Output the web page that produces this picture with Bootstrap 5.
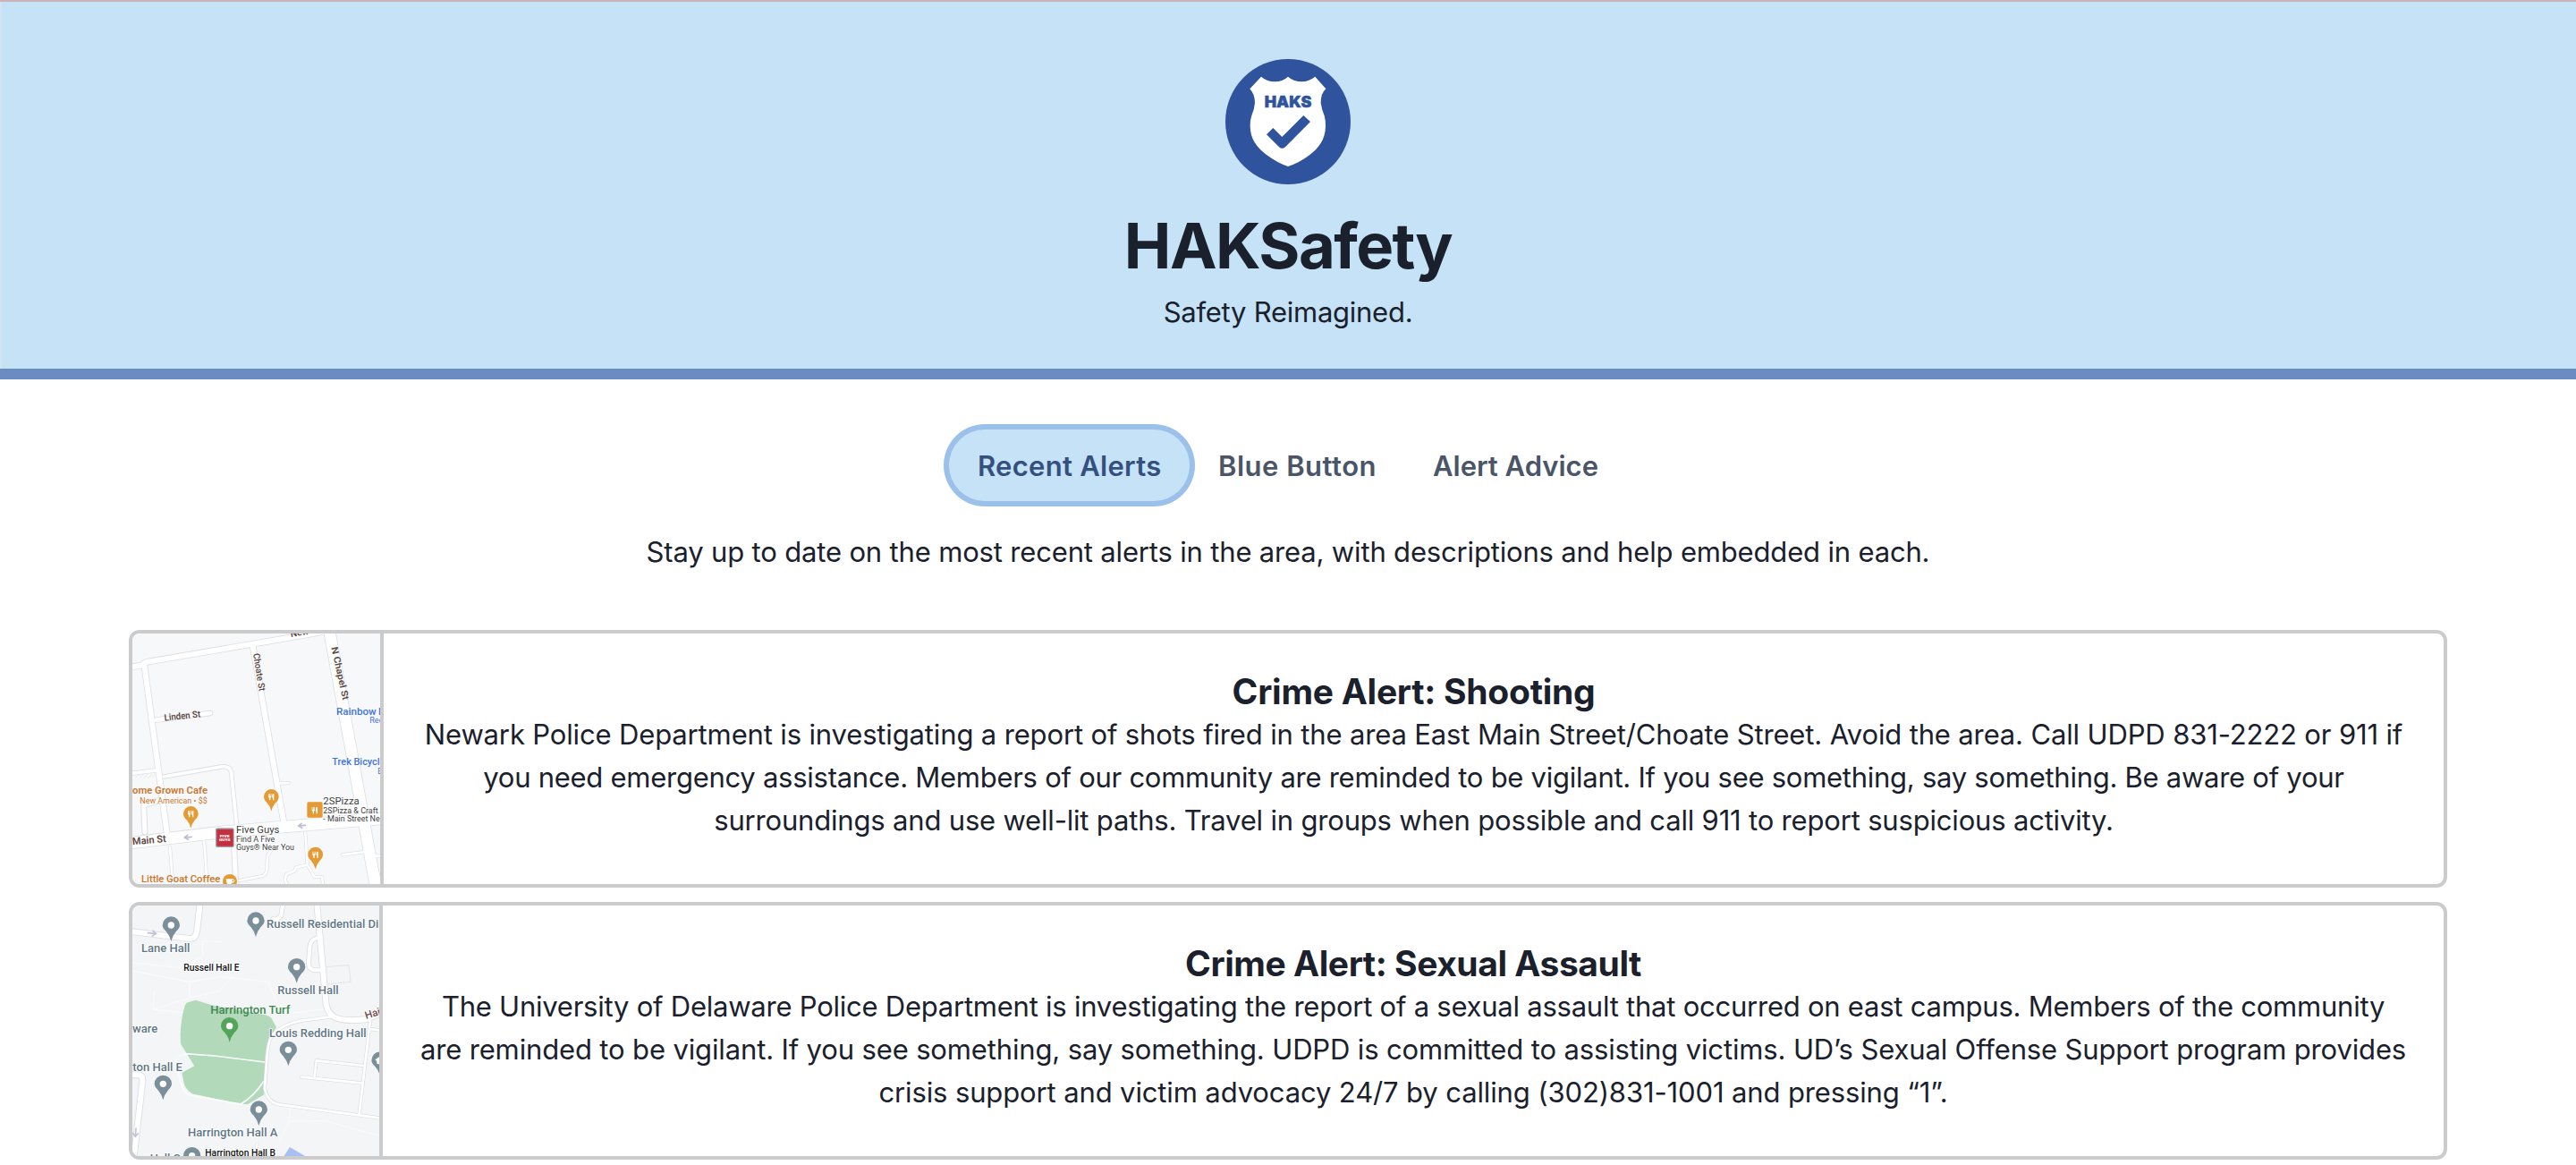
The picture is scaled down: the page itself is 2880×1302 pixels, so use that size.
<!DOCTYPE html>
<html lang="en">
<head>
<meta charset="utf-8">
<title>HAKSafety</title>
<link rel="stylesheet" href="https://cdn.jsdelivr.net/npm/bootstrap@5.3.0/dist/css/bootstrap.min.css">
<style>
body{font-family:Inter,"Liberation Sans",sans-serif;font-size:31px;line-height:48px;color:#1a202c;overflow:hidden}
.hero{height:424px;background:#c5e2f6;border-top:2px solid #ccb3b8;border-bottom:12px solid #6b8cc0;padding-top:64px;box-shadow:inset 2px 0 #cfe6f6}
.hero svg{width:140px;height:140px}
.hero h1{font-size:70.5px;line-height:86px;font-weight:700;letter-spacing:-1.6px;margin:26px 0 7px}
.hero p{letter-spacing:-.256px}
.tabs-row{margin-top:56px}
.tab-btn{height:80px;padding:2px 32px 0;border:0;background:none;font-weight:600;color:#4a5568;border-radius:40px;white-space:nowrap}
.tab-btn.active{background:#c5e2f6;color:#34507f;box-shadow:0 0 0 6px #9bc0ea;letter-spacing:.28px;width:269px}
.tab-blue{width:240px;letter-spacing:.5px}
.tab-advice{width:249px}
.intro{margin-top:33px;letter-spacing:-.166px}
.alerts{width:2592px;gap:16px;margin-top:63px}
.alert-item{height:288px;border:4px solid #cbcbcb;border-radius:12px;overflow:hidden;background:#fff}
.map-box{width:281px;height:280px;border-right:4px solid #cbcbcb}
.map-box.narrow{width:280px}
.map-box svg{display:block;width:100%;height:100%}
.alert-text{padding-top:41px;white-space:nowrap}
.alert-text h2{font-size:39px;line-height:48px;font-weight:700;margin:0}
.alert-text span{display:block}
svg text{font-family:Roboto,sans-serif}
</style>
<script src="https://cdn.jsdelivr.net/npm/bootstrap@5.3.0/dist/js/bootstrap.bundle.min.js"></script>
</head>
<body>
<header class="hero d-flex flex-column align-items-center">
  <svg class="flex-shrink-0" viewBox="510 198 420 420">
    <circle cx="720" cy="408" r="210" fill="#2f549d"/>
    <path fill="#fff" d="M630 257Q650 274 676 274Q702 274 720 257Q740 274 766 274Q791 273 811 257L847 298Q830 313 830 345Q833 368 842 388Q846 403 846 422C846 468 821 498 793 519Q758 546 720 558Q684 546 648 519C617 496 593 466 593 422Q593 403 598 388Q607 367 609 345Q609 316 592 298Z"/>
    <text x="641" y="360" font-size="51" fill="#2f549d" stroke="#2f549d" stroke-width="1.5" textLength="158" lengthAdjust="spacingAndGlyphs" style="font-family:Inter,sans-serif;font-weight:900">HAKS</text>
    <path fill="#2f549d" d="M670 429L700 459L772 387L795 408L711 493Q700 502 690 493L648 451Z"/>
  </svg>
  <h1>HAKSafety</h1>
  <p class="m-0">Safety Reimagined.</p>
</header>

<nav class="tabs-row d-flex justify-content-center">
  <button class="tab-btn active">Recent Alerts</button>
  <button class="tab-btn tab-blue">Blue Button</button>
  <button class="tab-btn tab-advice">Alert Advice</button>
</nav>

<p class="intro mb-0 text-center">Stay up to date on the most recent alerts in the area, with descriptions and help embedded in each.</p>

<main class="alerts d-flex flex-column mx-auto">
  <article class="alert-item d-flex">
    <div class="map-box flex-shrink-0">
      <svg viewBox="54 54 831 840" preserveAspectRatio="none">
        <defs>
          <g id="fork" fill="#fff"><path d="M-10-10v9q0 4 3 5v8h4v-8q3-1 3-5v-9h-2v8h-2v-8h-2v8h-2v-8zM3-6q0-4 6-4v22h-4v-8h-2z"/></g>
          <g id="food"><path fill="#e49b35" d="M0 45Q-3 30-14 17Q-25 8-25-4A25 25 0 0 1 25-4Q25 8 14 17Q3 30 0 45Z"/><use href="#fork" y="-4"/></g>
        </defs>
        <rect x="54" y="54" width="831" height="840" fill="#f7f8fa"/>
        <g fill="none" stroke-linecap="round" stroke-linejoin="round">
          <g stroke="#dedfe3">
            <path stroke-width="23" d="M40 168L88 160Q97 149 112 148L640 58L780 30M94 160L171 730M458 95L564 700"/>
            <path stroke-width="19" d="M133 344L315 321"/>
            <path stroke-width="16" d="M40 524L140 512M160 534L350 501Q382 496 386 522L404 700"/>
            <path stroke-width="21" d="M96 720L92 630L150 612M395 770L402 910"/>
            <path stroke-width="43" d="M40 757L360 719L900 674"/>
            <path stroke-width="42" d="M712 30L805 540L880 960"/>
            <path stroke-width="12" d="M545 557L580 555M180 770L190 900M294 752L298 790L304 900M414 882L490 867Q504 862 505 845L507 800L520 780M634 722L641 830L665 870H690L694 900M641 830L603 838L598 850L570 862L566 880L574 900M758 796L835 786M870 800H890M873 840L885 890"/>
          </g>
          <g stroke="#fff">
            <path stroke-width="18" d="M40 168L88 160Q97 149 112 148L640 58L780 30M94 160L171 730M458 95L564 700"/>
            <path stroke-width="14" d="M133 344L315 321"/>
            <path stroke-width="11" d="M40 524L140 512M160 534L350 501Q382 496 386 522L404 700"/>
            <path stroke-width="15" d="M96 720L92 630L150 612M395 770L402 910"/>
            <path stroke-width="38" d="M40 757L360 719L900 674"/>
            <path stroke-width="37" d="M712 30L805 540L880 960"/>
            <path stroke-width="8" d="M545 557L580 555M180 770L190 900M294 752L298 790L304 900M414 882L490 867Q504 862 505 845L507 800L520 780M634 722L641 830L665 870H690L694 900M641 830L603 838L598 850L570 862L566 880L574 900M758 796L835 786M870 800H890M873 840L885 890"/>
          </g>
          <path stroke="#e2e3e6" stroke-width="2" d="M64 538l14-12M78 538l14-12M92 538l14-12M106 538l14-12M120 536l10-9"/>
          <path stroke="#b9bdd8" stroke-width="5" d="M252 736L230 738M239 730L229 738L241 745M634 697L612 699M621 691L611 699L623 706"/>
        </g>
        <g font-size="31" font-weight="600" fill="#5c4643">
          <text transform="translate(586 66) rotate(-9)">New</text>
          <text transform="translate(459 122) rotate(81)" font-weight="500" textLength="128" lengthAdjust="spacingAndGlyphs">Choate St</text>
          <text transform="translate(721 101) rotate(77.5)" textLength="182" lengthAdjust="spacingAndGlyphs">N Chapel St</text>
          <text transform="translate(162 347) rotate(-6)" textLength="122" lengthAdjust="spacingAndGlyphs">Linden St</text>
          <text transform="translate(55 763) rotate(-5)" font-size="34" textLength="113" lengthAdjust="spacingAndGlyphs">Main St</text>
        </g>
        <g fill="#3f74df" font-size="35">
          <text x="738" y="326" font-weight="500" textLength="134" lengthAdjust="spacingAndGlyphs">Rainbow</text><text x="879" y="326" font-weight="500">R</text>
          <text x="850" y="355" font-size="27">Rec</text>
          <text x="724" y="496" font-weight="500" textLength="177" lengthAdjust="spacingAndGlyphs">Trek Bicycle</text>
          <text x="877" y="525" font-size="25">B</text>
        </g>
        <g fill="#cc762a" font-size="35">
          <text x="54" y="592" font-weight="600" textLength="252" lengthAdjust="spacingAndGlyphs">ome Grown Cafe</text>
          <text x="79" y="624" font-size="29" textLength="226" lengthAdjust="spacingAndGlyphs">New American • $$</text>
          <text x="84" y="889" font-weight="500" textLength="265" lengthAdjust="spacingAndGlyphs">Little Goat Coffee</text>
        </g>
        <use href="#food" x="250" y="662"/><use href="#food" x="520" y="605"/><use href="#food" x="668" y="799"/>
        <circle cx="381" cy="885" r="24" fill="#e49b35"/><path fill="#fff" d="M368 877h21q9 0 8 7q-1 6-9 6q-3 6-10 6q-10-2-10-19zM389 880v6q5 0 5-4q0-2-5-2z"/>
        <rect x="640" y="619" width="52" height="52" rx="5" fill="#e49b35"/><use href="#fork" x="666" y="646"/>
        <rect x="333" y="706" width="62" height="65" rx="6" fill="#9fa2ab"/><rect x="337" y="710" width="55" height="57" rx="2" fill="#c5303e"/>
        <g fill="#fff" font-size="13" font-weight="900"><text x="347" y="737" textLength="33" lengthAdjust="spacingAndGlyphs">FIVE</text><text x="345" y="750" textLength="38" lengthAdjust="spacingAndGlyphs">GUYS</text></g>
        <g fill="#3c3d40" font-size="28.5" stroke="#fff" stroke-width="4" paint-order="stroke">
          <text x="694" y="627" font-size="35" textLength="121" lengthAdjust="spacingAndGlyphs">2SPizza</text>
          <text x="694" y="657" textLength="184" lengthAdjust="spacingAndGlyphs">2SPizza &amp; Craft</text>
          <text x="694" y="684" textLength="190" lengthAdjust="spacingAndGlyphs">- Main Street Ne</text>
          <text x="402" y="722" font-size="35" textLength="145" lengthAdjust="spacingAndGlyphs">Five Guys</text>
          <text x="402" y="752" textLength="130" lengthAdjust="spacingAndGlyphs">Find A Five</text>
          <text x="402" y="779" textLength="195" lengthAdjust="spacingAndGlyphs">Guys® Near You</text>
        </g>
      </svg>
    </div>
    <div class="alert-text flex-grow-1 text-center">
      <h2 style="letter-spacing:-.257px">Crime Alert: Shooting</h2>
      <span style="letter-spacing:-.144px">Newark Police Department is investigating a report of shots fired in the area East Main Street/Choate Street. Avoid the area. Call UDPD 831-2222 or 911 if</span>
      <span style="letter-spacing:-.265px">you need emergency assistance. Members of our community are reminded to be vigilant. If you see something, say something. Be aware of your</span>
      <span style="letter-spacing:-.183px">surroundings and use well-lit paths. Travel in groups when possible and call 911 to report suspicious activity.</span>
    </div>
  </article>

  <article class="alert-item d-flex">
    <div class="map-box narrow flex-shrink-0">
      <svg viewBox="54 66 828 840" preserveAspectRatio="none">
        <defs>
          <g id="pin"><path d="M0 54Q-4 36-16 22Q-29 10-29 0A29 29 0 0 1 29 0Q29 10 16 22Q4 36 0 54Z"/><circle r="11" fill="#fff"/></g>
        </defs>
        <rect x="54" y="66" width="828" height="840" fill="#f4f5f7"/>
        <g fill="none" stroke="#fafbfc" stroke-width="3">
          <path d="M54 258L225 276L290 235V185L355 188M54 285L245 322L350 305L510 322L545 410L600 425L705 413M128 350L124 415L250 375L345 352L392 305M124 415L225 425M245 375V320M205 575L240 562M585 740L580 790L700 788L882 838M580 790L545 860"/>
        </g>
        <path fill="#b2d9b9" d="M236 392L266 383L320 400L500 433Q515 436 522 447L537 475L513 510L500 570L496 700L440 733L410 730L262 699Q240 693 228 666L220 627L262 604L216 530L215 500Q217 440 231 400Z"/>
        <path fill="none" stroke="#fff" stroke-width="5" d="M232 563L330 570L498 591M495 655Q460 708 416 733"/>
        <path fill="none" stroke="#fbfbfc" stroke-width="6" d="M200 580Q210 660 232 692Q242 705 270 706L420 733"/>
        <path fill="none" stroke="#e3e4e7" stroke-width="3" d="M700 272L780 266L786 322L706 330"/>
        <g fill="none" stroke-linecap="round" stroke-linejoin="round">
          <g stroke="#dcdde1">
            <path stroke-width="23" d="M40 152L245 177Q265 178 270 155L282 50M40 634H75Q90 636 88 655L58 920M672 50L704 400Q710 430 735 442Q770 456 840 447L900 420"/>
            <path stroke-width="17" d="M673 175Q650 182 649 205L645 260Q646 282 665 283H688M560 50L553 100L540 112L525 112"/>
            <path stroke-width="12" d="M716 440L620 452Q555 465 522 502Q508 525 505 580L498 680Q508 725 545 733L890 779M852 450L815 765M852 480L890 485M830 603L671 586L665 640M622 641L822 661M472 866L468 920"/>
          </g>
          <g stroke="#fff">
            <path stroke-width="18" d="M40 152L245 177Q265 178 270 155L282 50M40 634H75Q90 636 88 655L58 920M672 50L704 400Q710 430 735 442Q770 456 840 447L900 420"/>
            <path stroke-width="12" d="M673 175Q650 182 649 205L645 260Q646 282 665 283H688M560 50L553 100L540 112L525 112"/>
            <path stroke-width="8" d="M716 440L620 452Q555 465 522 502Q508 525 505 580L498 680Q508 725 545 733L890 779M852 450L815 765M852 480L890 485M830 603L671 586L665 640M622 641L822 661M472 866L468 920"/>
          </g>
          <path stroke="#c0c2dc" stroke-width="5" d="M106 158L133 160M123 151L134 160L121 168M66 813L64 840M55 829L64 841L73 830"/>
        </g>
        <path fill="#a7bff3" d="M560 910L582 876L640 910Z"/>
        <g fill="#7b8f9b">
          <use href="#pin" x="184" y="132"/><use href="#pin" x="468" y="117"/><use href="#pin" x="605" y="272"/><use href="#pin" x="577" y="550"/><use href="#pin" x="157" y="664"/><use href="#pin" x="478" y="750"/><use href="#pin" x="254" y="905"/>
          <use href="#pin" x="885" y="585"/>
        </g>
        <path fill="#fff" d="M868 583L886 571V600L874 596V588Z"/>
        <use href="#pin" x="380" y="470" fill="#55a45b"/>
        <g fill="#5f7685" font-size="41" font-weight="500" stroke="#fff" stroke-width="5" paint-order="stroke">
          <text x="84" y="223" textLength="163" lengthAdjust="spacingAndGlyphs">Lane Hall</text>
          <text x="504" y="141" textLength="376" lengthAdjust="spacingAndGlyphs">Russell Residential Di</text>
          <text x="541" y="363" textLength="205" lengthAdjust="spacingAndGlyphs">Russell Hall</text>
          <text x="54" y="493" textLength="85" lengthAdjust="spacingAndGlyphs">ware</text>
          <text x="513" y="508" textLength="326" lengthAdjust="spacingAndGlyphs">Louis Redding Hall</text>
          <text x="55" y="621" textLength="167" lengthAdjust="spacingAndGlyphs">ton Hall E</text>
          <text x="240" y="840" textLength="301" lengthAdjust="spacingAndGlyphs">Harrington Hall A</text>
          <text x="113" y="927" textLength="103" lengthAdjust="spacingAndGlyphs">Hall C</text>
          <text x="316" y="428" fill="#3f8a50" stroke="none" textLength="267" lengthAdjust="spacingAndGlyphs">Harrington Turf</text>
          <text transform="translate(838 447) rotate(-17)" font-size="35" fill="#6b4c4a">Hain</text>
          <g fill="#111" font-size="33"><text x="226" y="286" textLength="187" lengthAdjust="spacingAndGlyphs">Russell Hall E</text><text x="298" y="907" textLength="236" lengthAdjust="spacingAndGlyphs">Harrington Hall B</text></g>
        </g>
      </svg>
    </div>
    <div class="alert-text flex-grow-1 text-center">
      <h2 style="letter-spacing:-.443px">Crime Alert: Sexual Assault</h2>
      <span style="letter-spacing:-.235px">The University of Delaware Police Department is investigating the report of a sexual assault that occurred on east campus. Members of the community</span>
      <span style="letter-spacing:-.141px">are reminded to be vigilant. If you see something, say something. UDPD is committed to assisting victims. UD’s Sexual Offense Support program provides</span>
      <span style="letter-spacing:-.125px">crisis support and victim advocacy 24/7 by calling (302)831-1001 and pressing “1”.</span>
    </div>
  </article>
</main>
</body>
</html>
